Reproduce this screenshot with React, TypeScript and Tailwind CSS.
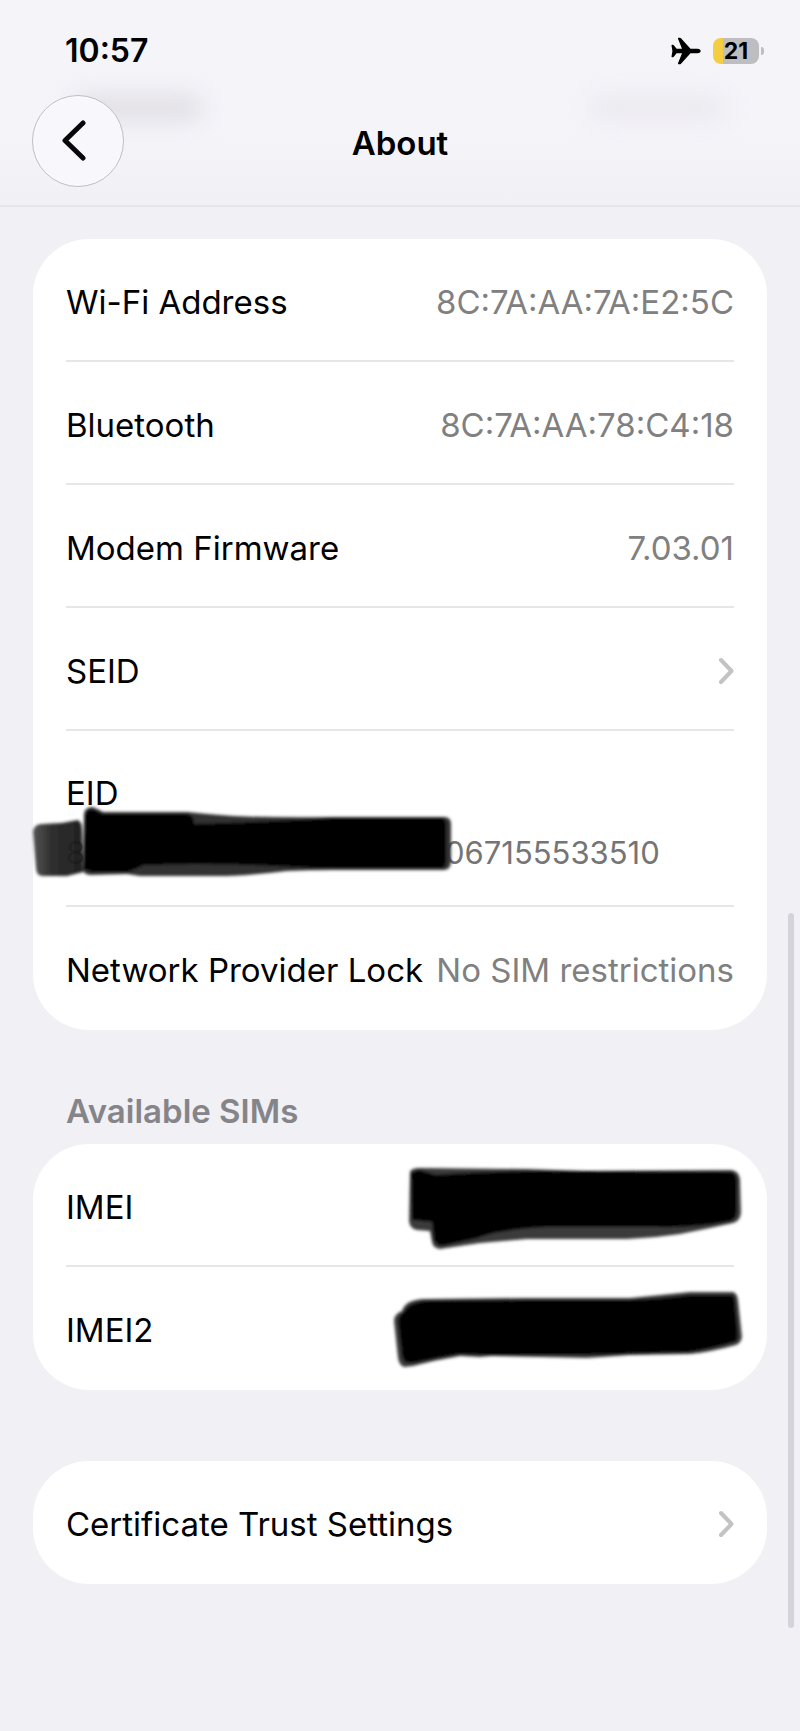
import type { ReactNode } from "react";

interface IRowProps {
	label: string;
	value?: string;
	href?: string;
	children?: ReactNode;
}

function Chevron() {
	return (
		<svg
			width="16"
			height="28"
			viewBox="0 0 16 28"
			fill="none"
			stroke="#c3c3c5"
			strokeWidth="4"
			strokeLinecap="round"
			strokeLinejoin="round"
			aria-hidden="true"
		>
			<path d="M3 3 L13.5 14 L3 25" />
		</svg>
	);
}

function Row({ label, value, href, children }: IRowProps) {
	const content = (
		<>
			<span>{label}</span>
			{value && <span className="text-[#808080]">{value}</span>}
			{href && <Chevron />}
			{children}
		</>
	);

	return (
		<li className="relative mx-[33px] border-b-2 border-[#e6e6e7] last:border-transparent">
			{href ? (
				<a href={href} className="flex min-h-[121px] items-center justify-between gap-2 pt-1">
					{content}
				</a>
			) : (
				<div className="flex min-h-[121px] items-center justify-between gap-2 pt-1">
					{content}
				</div>
			)}
		</li>
	);
}

function Card({ children }: { children: ReactNode }) {
	return (
		<ul className="mx-[33px] rounded-[56px] bg-white text-[33px] leading-10 text-black">
			{children}
		</ul>
	);
}

function StatusBar() {
	return (
		<div className="flex items-center justify-between pt-[31px] pr-9 pl-[65px]">
			<span className="text-[32px] leading-10 font-semibold">10:57</span>
			<div className="flex items-center gap-3">
				<svg width="30" height="28" viewBox="0 0 30 28" aria-label="Airplane mode">
					<path d="M26.5 11.8 H19.5 L10 1.3 Q9.5 .8 8.8 .8 H7.6 Q6.7 .8 7 1.8 L11 11.8 H5.6 L2.8 8.2 Q2.4 7.8 1.9 7.8 H1.2 Q.4 7.8 .5 8.6 L1.4 14 L.5 19.4 Q.4 20.2 1.2 20.2 H1.9 Q2.4 20.2 2.8 19.8 L5.6 16.2 H11 L7 26.2 Q6.7 27.2 7.6 27.2 H8.8 Q9.5 27.2 10 26.7 L19.5 16.2 H26.5 Q29.7 15.8 29.7 14 Q29.7 12.2 26.5 11.8 Z" />
				</svg>
				<div className="flex items-center gap-[2px]">
					<div className="flex h-[26px] w-[46px] items-center justify-center rounded-lg bg-[linear-gradient(90deg,#f5cd43_10px,#bebec0_10px)] text-[23px] leading-[26px] font-bold">
						21
					</div>
					<div className="h-2 w-[3px] rounded-r-full bg-[#bebec0]" />
				</div>
			</div>
		</div>
	);
}

function Header() {
	return (
		<header className="relative h-[207px] border-b-2 border-[#e6e5ea] bg-linear-to-b from-[#f5f4f9] from-65% to-[#f1f0f5]">
			{/* rows scrolled beneath the translucent bar */}
			<div className="absolute top-[97px] left-[76px] h-[22px] w-[124px] bg-[#dcdbe0] blur-[12px]" />
			<div className="absolute top-[97px] right-[76px] h-[22px] w-[132px] bg-[#e9e8ed] blur-[12px]" />
			<div className="relative">
				<StatusBar />
				<div className="mt-6 grid grid-cols-[1fr_auto_1fr] items-center px-8">
					<button
						type="button"
						aria-label="Back"
						className="flex size-[92px] items-center justify-center rounded-full border border-[#bfbec3] bg-[#f8f7fc] pr-1.5 inset-shadow-[0_0_3px_#ffffff]"
					>
						<svg
							width="28"
							height="42"
							viewBox="0 0 28 42"
							fill="none"
							stroke="#08080a"
							strokeWidth="5"
							strokeLinecap="round"
							strokeLinejoin="round"
							aria-hidden="true"
						>
							<path d="M22 3 L4 20.5 L22 38" />
						</svg>
					</button>
					<h1 className="pt-1 text-[33px] leading-10 font-semibold">About</h1>
				</div>
			</div>
		</header>
	);
}

function EidMarker() {
	return (
		<svg
			className="absolute top-[69px] -left-10"
			width="432"
			height="84"
			viewBox="0 0 432 84"
			aria-hidden="true"
		>
			<defs>
				<filter id="soft">
					<feGaussianBlur stdDeviation="1.5" />
				</filter>
				<linearGradient id="fade">
					<stop offset="0" stopColor="#4a4a4a" />
					<stop offset=".4" stopColor="#222" />
					<stop offset="1" stopColor="#161616" />
				</linearGradient>
			</defs>
			<g filter="url(#soft)">
				<path
					fill="url(#fade)"
					fillOpacity=".95"
					d="M7 32 Q8 24 16 24 L36 23 L52 20 Q56 22 56 30 L57 72 L41 76 H16 Q10 75 10 68 Z"
				/>
				<path
					fill="#303030"
					d="M58 14 Q58 8 66 7 Q70 8 77 12 L161 12 Q180 14 207 16 Q255 18 307 17 H418 Q425 17 425 24 V62 Q425 69 418 70 L307 70 Q283 70 261 71 Q228 75 201 76 H114 L101 74 L64 75 Q57 74 57 70 Z"
				/>
				<path
					fill="#000"
					d="M59 16 Q60 10 66 9 L77 14 H161 Q168 15 168 24 Q245 22 310 18 H416 Q420 19 420 26 V60 Q420 67 416 68 H290 Q220 64 168 64 L118 65 L102 72 L66 72 L58 69 Z"
				/>
			</g>
		</svg>
	);
}

function ImeiMarker({ base, core }: { base: string; core: string }) {
	return (
		<svg
			className="absolute top-4 -right-3"
			width="360"
			height="96"
			viewBox="0 0 360 96"
			aria-hidden="true"
		>
			<g filter="url(#soft)">
				<path fill="#3a3a3a" d={base} />
				<path fill="#000" d={core} />
			</g>
		</svg>
	);
}

export default function App() {
	return (
		<div className="relative min-h-screen bg-[#f0f0f5] font-['Inter',sans-serif] text-black">
			<Header />
			<main className="pt-8">
				<Card>
					<Row label="Wi-Fi Address" value="8C:7A:AA:7A:E2:5C" />
					<Row label="Bluetooth" value="8C:7A:AA:78:C4:18" />
					<Row label="Modem Firmware" value="7.03.01" />
					<Row label="SEID" href="#seid" />
					<li className="relative mx-[33px] border-b-2 border-[#e6e6e7] pt-8 pb-[22px] leading-[60px]">
						<div>EID</div>
						<div className="flex text-[31px] text-[#757575]">
							<span className="w-[379px]">8</span>
							<span>067155533510</span>
						</div>
						<EidMarker />
					</li>
					<Row label="Network Provider Lock" value="No SIM restrictions" />
				</Card>

				<h2 className="px-[66px] pt-[61px] pb-[13px] text-[33px] leading-10 font-semibold text-[#858489]">
					Available SIMs
				</h2>
				<Card>
					<Row label="IMEI">
						<ImeiMarker
							base="M24 12 Q25 8 34 8 L141 9 L201 11 L345 10 Q353 11 354 19 L355 53 Q354 61 347 63 Q320 69 294 74 Q268 78 241 79 H141 L94 83 L54 89 Q47 88 46 82 L44 71 L31 70 Q24 69 23 61 Z"
							core="M25 13 L33 10 L50 15 Q90 12 141 11 L345 12 Q350 13 351 20 V52 Q350 59 345 61 Q310 68 270 67 H160 Q110 70 92 78 L56 86 Q50 85 48 80 L46 62 L26 60 Z"
						/>
					</Row>
					<Row label="IMEI2">
						<ImeiMarker
							base="M8 38 Q8 31 16 28 Q19 17 37 16 L141 15 H244 Q275 12 304 9 H347 Q351 10 352 17 L356 54 Q355 60 350 62 Q325 69 304 71 L244 72 L201 75 L106 73 L94 74 L74 73 Q50 77 27 83 L18 84 Q13 82 12 75 Z"
							core="M12 38 Q13 32 18 29 Q22 20 38 18 L141 17 H244 Q275 16 304 12 H345 Q349 13 349 19 L352 53 Q352 58 348 59 Q325 66 304 69 L201 72 L94 72 L74 71 Q50 75 27 80 L21 80 Q17 78 16 72 Z"
						/>
					</Row>
				</Card>

				<div className="pt-[71px] pb-[146px]">
					<Card>
						<Row label="Certificate Trust Settings" href="#trust" />
					</Card>
				</div>
			</main>
			{/* scroll indicator */}
			<div className="absolute top-[913px] right-[6px] h-[715px] w-[6px] rounded-full bg-[#d4d3d9]" />
		</div>
	);
}
